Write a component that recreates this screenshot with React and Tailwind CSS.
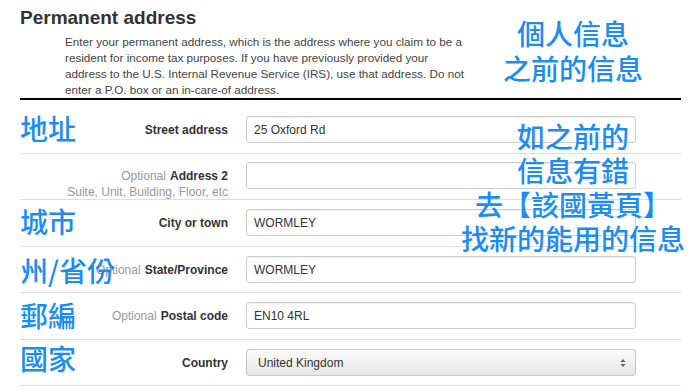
const rows = [
  { label: "Street address", value: "25 Oxford Rd", h: "h-[54px] pt-[16px]", note: "地址", noteTop: "top-[14px]" },
  { label: "Address 2", optional: true, hint: "Suite, Unit, Building, Floor, etc", value: "", h: "h-[46px] pt-[8px]" },
  { label: "City or town", value: "WORMLEY", h: "h-[47px] pt-[9px]", note: "城市", noteTop: "top-[7px]" },
  { label: "State/Province", optional: true, value: "WORMLEY", h: "h-[46px] pt-[9px]", note: "州/省份", noteTop: "top-[9px]" },
  { label: "Postal code", optional: true, value: "EN10 4RL", h: "h-[47px] pt-[9px]", note: "郵編", noteTop: "top-[8px]" },
  { label: "Country", select: true, value: "United Kingdom", h: "h-[46px] pt-[9px]", note: "國家", noteTop: "top-[4px]" },
];

const noteFont = "font-['Noto_Sans_CJK_TC','Noto_Sans_CJK_SC',sans-serif] font-medium text-[#1a8cf5]";

export default function App() {
  return (
    <div className="relative w-[700px] h-[390px] overflow-hidden bg-white font-['Liberation_Sans',Arial,sans-serif] text-[#333]">
      <div className="ml-[20px] w-[661px]">
        {/* Header */}
        <div className="border-b-2 border-black pt-[6px]">
          <h2 className="text-[19px] leading-[24px] font-bold text-[#333]">Permanent address</h2>
          <p className="mt-[4px] pl-[45px] text-[11.7px] leading-[16px] text-[#444] whitespace-nowrap">
            Enter your permanent address, which is the address where you claim to be a<br />
            resident for income tax purposes. If you have previously provided your<br />
            address to the U.S. Internal Revenue Service (IRS), use that address. Do not<br />
            enter a P.O. box or an in-care-of address.
          </p>
        </div>

        {/* Rows */}
        {rows.map((r) => (
          <div key={r.label} className={`relative flex items-start border-b border-[#ddd] ${r.h}`}>
            <div className="w-[208px] pt-[6px] text-right text-[12px] leading-[16px]">
              {r.optional && <span className="text-[#999] mr-[4px]">Optional</span>}
              <span className="font-bold">{r.label}</span>
              {r.hint && <div className="text-[#999]">{r.hint}</div>}
            </div>
            {r.select ? (
              <div className="ml-[18px] w-[390px] h-[27px] flex items-center justify-between px-[11px] rounded-[3px] border border-[#c6c6c6] bg-gradient-to-b from-[#fbfbfb] to-[#e6e6e6] text-[12px] text-[#333]">
                <span>{r.value}</span>
                <svg width="6" height="10" viewBox="0 0 6 10" className="mr-[-2px]">
                  <path d="M0.5 4 L3 1 L5.5 4 Z M0.5 6 L3 9 L5.5 6 Z" fill="#666" />
                </svg>
              </div>
            ) : (
              <div className="ml-[18px] w-[390px] h-[27px] flex items-center px-[7px] rounded-[3px] border border-[#ccc] shadow-[inset_0_1px_1px_rgba(0,0,0,0.06)] text-[12px] text-[#333]">
                {r.value}
              </div>
            )}
            {r.note && (
              <span className={`absolute left-0 ${r.noteTop} text-[28px] leading-[28px] ${noteFont}`}>{r.note}</span>
            )}
          </div>
        ))}
      </div>

      {/* Annotations */}
      <div className={`absolute left-[473px] top-[16px] w-[200px] text-center text-[28px] leading-[35px] ${noteFont}`}>
        個人信息<br />之前的信息
      </div>
      <div className={`absolute left-[453px] top-[119px] w-[240px] text-center text-[28px] leading-[34px] ${noteFont}`}>
        如之前的<br />信息有錯<br />去【該國黃頁】<br />找新的能用的信息
      </div>
    </div>
  );
}
